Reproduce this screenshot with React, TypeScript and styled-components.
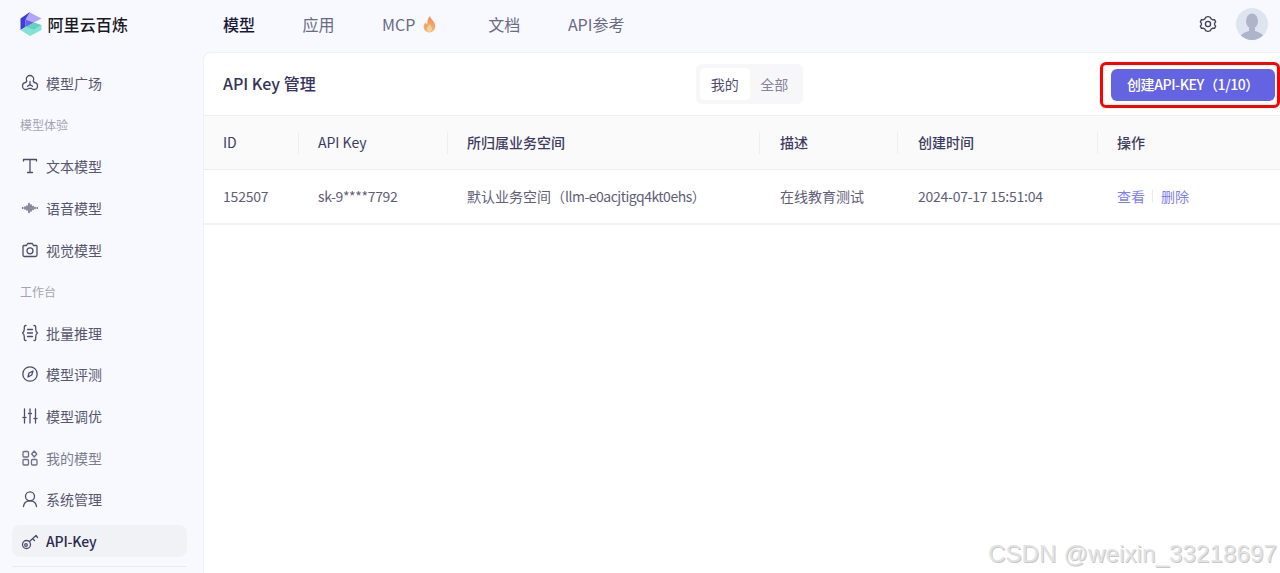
import React from 'react';
import styled, { createGlobalStyle } from 'styled-components';

const Global = createGlobalStyle`
  html, body { margin: 0; padding: 0; height: 573px; overflow: hidden; background: #f8f9fe; }
  body { font-family: "Noto Sans CJK SC", "Noto Sans", sans-serif; color: #26244c; }
  #root { height: 573px; }
  * { box-sizing: border-box; }
`;

const Page = styled.div`
  position: relative; height: 573px; width: 1280px; display: flex; flex-direction: column; overflow: hidden;
`;
const Header = styled.header`
  height: 52px; flex: none; display: flex; align-items: center; padding: 0 12.5px 4px 19.5px;
`;
const Brand = styled.div`
  width: 199.5px; display: flex; align-items: center; gap: 6px;
  font-size: 16px; font-weight: 500; color: #1a1a24; letter-spacing: 0.1px;
`;
const TopNav = styled.nav`
  display: flex; gap: 47.5px; font-size: 16px; flex: 1; padding-left: 4px;
`;
const TopLink = styled.span<{ $active?: boolean }>`
  display: flex; align-items: center; gap: 6px; white-space: nowrap;
  color: ${p => (p.$active ? '#1a1838' : '#6b6a85')};
  font-weight: ${p => (p.$active ? 500 : 400)};
  svg { margin-right: 2.5px; }
`;
const HeaderRight = styled.div`
  display: flex; align-items: center; gap: 19px;
`;
const Avatar = styled.div`
  width: 32px; height: 32px; border-radius: 50%; overflow: hidden; background: #dfe5ee; display: flex;
`;
const Body = styled.div`
  flex: 1; display: flex; min-height: 0;
`;
const Side = styled.aside`
  width: 203px; flex: none; padding: 15.3px 16px 0 12px; display: flex; flex-direction: column; gap: 9.6px;
`;
const SideItem = styled.div<{ $active?: boolean; $muted?: boolean }>`
  height: 32px; flex: none; display: flex; align-items: center; gap: 6px; padding-left: 8px; border-radius: 8px;
  font-size: 14px; color: ${p => (p.$active ? '#2c2a50' : p.$muted ? '#7d7c94' : '#57566f')};
  background: ${p => (p.$active ? '#f1f2f6' : 'transparent')};
  font-weight: ${p => (p.$active ? 500 : 400)};
  letter-spacing: ${p => (p.$active ? '-0.2px' : '0')};
  svg { flex: none; }
`;
const SideLabel = styled.div`
  height: 32px; flex: none; display: flex; align-items: center; padding-left: 8px; font-size: 12px; color: #a3a3b5;
`;
const Divider = styled.div`
  height: 1px; background: #e9eaf2; flex: none;
`;
const Main = styled.main`
  flex: 1; background: #fff; border-radius: 8px 0 0 0; border: 1px solid #f0f0f6; border-width: 1px 0 0 1px;
  display: flex; flex-direction: column; min-width: 0;
`;
const Toolbar = styled.div`
  height: 63px; flex: none; display: flex; align-items: center; padding-left: 19px;
  position: relative; border-bottom: 1px solid #eeeef3;
`;
const Title = styled.h1`
  margin: 0 0 2px; width: 473px; font-size: 16px; font-weight: 500; color: #35335a;
`;
const Segment = styled.div`
  width: 107px; height: 40px; background: #f7f7fa; border-radius: 6px; padding: 4px; display: flex;
`;
const SegmentItem = styled.div<{ $active?: boolean }>`
  width: 50px; display: flex; align-items: center; justify-content: center; font-size: 14px; border-radius: 5px;
  background: ${p => (p.$active ? '#fff' : 'transparent')};
  color: ${p => (p.$active ? '#504e6c' : '#85849a')};
`;
const Highlight = styled.div`
  margin-left: auto; width: 180px; height: 46px; margin-top: 1px; border: 3px solid #f00; border-radius: 6px;
  display: flex; align-items: center; padding-left: 8px;
`;
const CreateButton = styled.button`
  width: 164px; height: 32px; border: 0; border-radius: 6px; background: #6464e2; color: #fff; padding: 0 0 2px;
  font-family: inherit; font-size: 14px; font-weight: 500; white-space: nowrap; letter-spacing: -0.4px;
`;
const Row = styled.div<{ $head?: boolean }>`
  display: grid; grid-template-columns: 94px 149px 312px 138px 200px 1fr; align-items: center;
  height: ${p => (p.$head ? '54px' : '55px')}; flex: none;
  background: ${p => (p.$head ? '#fafafb' : '#fff')};
  border-bottom: ${p => (p.$head ? '1px solid #ecedf2' : '2px solid #f3f3f6')};
`;
const HeadCell = styled.div<{ $sep?: boolean; $medium?: boolean; $shift?: boolean }>`
  height: 22px; padding: 0 0 2px ${p => (p.$shift ? '20px' : '19px')}; display: flex; align-items: center; font-size: 14px; white-space: nowrap;
  color: #3d3b5e; font-weight: ${p => (p.$medium ? 500 : 400)};
  border-left: ${p => (p.$sep ? '1px solid #efeff3' : '0')};
`;
const Cell = styled.div<{ $first?: boolean; $shift?: boolean }>`
  padding: 0 0 1px ${p => (p.$first ? '19px' : p.$shift ? '21px' : '20px')};
  font-size: 14px; color: #5f5e78; white-space: nowrap; display: flex; align-items: center;
`;
const Tight = styled.span<{ $by: number }>`
  letter-spacing: ${p => p.$by}px;
`;
const Action = styled.span`
  color: #7f7ff0;
`;
const ActionSep = styled.span`
  width: 1px; height: 12px; background: #ececf2; margin: 0 8px 0 7px;
`;
const Watermark = styled.div`
  position: absolute; right: 3px; bottom: 5px; font-family: "Liberation Sans", sans-serif; font-size: 24px;
  color: #e3e3e3; text-shadow: 1px 1px 0 #c8c8c8; letter-spacing: 0.15px;
`;

const Ic: React.FC<{ children: React.ReactNode; c?: string }> = ({ children, c = '#4d4c6b' }) => (
  <svg width="20" height="20" viewBox="0 0 20 20" fill="none" stroke={c} strokeWidth="1.3" strokeLinecap="round" strokeLinejoin="round">
    {children}
  </svg>
);

const Logo = () => (
  <svg width="22" height="24" viewBox="0 0 22 24">
    <path d="M0.500 6.500 9.500 0.300 12 4 5.500 8V15L0.500 18z" fill="#3a3fd8" />
    <path d="M9.500 0.300 21.500 6.500 14 10.500 5.500 7.500z" fill="#b0a5f8" />
    <path d="M5.500 7.500 14 10.500 8 14 5.500 15z" fill="#6b5ee8" />
    <path d="M0.500 18 5.500 15 14 18 21.500 13V18L10 24z" fill="#82e2d3" />
    <path d="M5.500 15 14 10.500 21.500 13 14 18z" fill="#62cfc0" />
  </svg>
);

const Flame = () => (
  <svg width="17" height="19" viewBox="0 0 16 18">
    <defs>
      <linearGradient id="fl" x1="0" y1="0" x2="0" y2="1">
        <stop offset="0" stopColor="#ee8f55" />
        <stop offset="1" stopColor="#f2b777" />
      </linearGradient>
    </defs>
    <path d="M8.500 1c.6 3 3.800 4.500 4.800 8 .8 3.800-1.700 7.500-5.300 7.500S2 13.600 2.500 10.500c.3-1.700 1.200-2.800 2-3.700.2 1.200.7 2 1.500 2.300C5.600 6 6.500 3 8.500 1z" fill="url(#fl)" />
    <path d="M8 8.500c.6 1.500 2.400 2.500 2.400 4.600 0 1.800-1.100 3.100-2.400 3.100s-2.500-1.200-2.400-3c.1-1.900 1.900-2.900 2.400-4.700z" fill="#f5d28f" />
  </svg>
);

export default function App() {
  return (
    <Page>
      <Global />
      <Header>
        <Brand><Logo />阿里云百炼</Brand>
        <TopNav>
          <TopLink $active>模型</TopLink>
          <TopLink>应用</TopLink>
          <TopLink>MCP <Flame /></TopLink>
          <TopLink>文档</TopLink>
          <TopLink>API参考</TopLink>
        </TopNav>
        <HeaderRight>
          <svg width="18" height="18" viewBox="0 0 18 18" fill="none" stroke="#3f3e5c" strokeWidth="1.3" strokeLinejoin="round">
            <path d="M9 1.500l2.500.9.600 1.600 1.700.9 1.700-.3 1.200 2.300-1.100 1.300v1.600l1.100 1.300-1.200 2.300-1.700-.3-1.700.9-.6 1.600L9 16.500l-2.500-.9-.6-1.600-1.700-.9-1.700.3-1.200-2.300 1.100-1.300V8.200L1.300 6.900l1.200-2.300 1.700.3 1.700-.9.600-1.600z" />
            <circle cx="9" cy="9" r="2.600" />
          </svg>
          <Avatar>
            <svg width="32" height="32" viewBox="0 0 32 32">
              <ellipse cx="16" cy="13" rx="6" ry="7.500" fill="#aeb4ca" />
              <path d="M3 32c1-6 6-8 10-9v-3h6v3c4 1 9 3 10 9z" fill="#aeb4ca" />
            </svg>
          </Avatar>
        </HeaderRight>
      </Header>
      <Body>
        <Side>
          <SideItem>
            <Ic><path d="M10 2.500c2.200 0 3.700 1.700 3.700 3.600 0 .7-.2 1.300-.5 1.900l1.100 1.500c1.900.2 3.200 1.800 3.200 3.500 0 2-1.600 3.500-3.500 3.500-1 0-2-.4-2.600-1.200H8.600c-.6.800-1.600 1.200-2.600 1.200-1.900 0-3.500-1.500-3.500-3.500 0-1.700 1.300-3.300 3.200-3.500L6.800 8c-.3-.6-.5-1.200-.5-1.900 0-1.900 1.500-3.600 3.700-3.600z" /><path d="M10 8.500v3l-2.500 1.800M10 11.500l2.500 1.800" /></Ic>
            模型广场
          </SideItem>
          <SideLabel>模型体验</SideLabel>
          <SideItem>
            <Ic><path d="M3.500 5V3.500h13V5M10 3.500v13M7.500 16.500h5" /></Ic>
            文本模型
          </SideItem>
          <SideItem>
            <Ic><path d="M2.500 10h.5M5 9v2M7 8v4M9 5.500v9M11 7v6M13 8.500v3M15 9.500v1M17 10h.5" /></Ic>
            语音模型
          </SideItem>
          <SideItem>
            <Ic><path d="M3.500 5.500h3l1.200-2h4.600l1.200 2h3A1.500 1.500 0 0 1 17 7v8a1.500 1.500 0 0 1-1.500 1.500h-11A1.500 1.500 0 0 1 3 15V7a1.500 1.500 0 0 1 .5-1.500z" /><circle cx="10" cy="10.800" r="3" /></Ic>
            视觉模型
          </SideItem>
          <SideLabel>工作台</SideLabel>
          <SideItem>
            <Ic><path d="M6 2.500C4 2.500 4.300 4 4.300 6S4 9 2.500 10C4 11 4.300 12 4.300 14s-.3 3.500 1.700 3.500M14 2.500c2 0 1.700 1.500 1.700 3.500s.300 3 1.800 4c-1.500 1-1.800 2-1.800 4s.3 3.500-1.700 3.500M7.500 6.500h5M7.500 10h5M7.500 13.500h5" /></Ic>
            批量推理
          </SideItem>
          <SideItem>
            <Ic><circle cx="10" cy="10" r="7.200" /><path d="M13 7l-1.300 4L8 13l1-4z" /></Ic>
            模型评测
          </SideItem>
          <SideItem>
            <Ic><path d="M4.500 3v7M4.500 13v4M10 3v3M10 9v8M15.500 3v8M15.500 14v3M3 11.500h3M8.500 7.500h3M14 12.500h3" /></Ic>
            模型调优
          </SideItem>
          <SideItem $muted>
            <Ic c="#6f6e88"><rect x="3" y="3.500" width="5.500" height="5.500" rx="1" /><rect x="3" y="11.500" width="5.500" height="5.500" rx="1" /><rect x="11.500" y="11.500" width="5.500" height="5.500" rx="1" /><path d="M14.200 3l2.500 3-2.500 3-2.500-3z" /></Ic>
            我的模型
          </SideItem>
          <SideItem>
            <Ic><circle cx="10" cy="7.300" r="4.500" /><path d="M3.500 17.500c.4-3.500 3-5.700 6.500-5.700s6.100 2.200 6.500 5.700" /></Ic>
            系统管理
          </SideItem>
          <SideItem $active>
            <Ic><circle cx="6.500" cy="13.500" r="4" /><circle cx="6" cy="14" r="1.300" /><path d="M9.500 10.500 16 4.500l1.500 2M13 8l1.500 1.500" /></Ic>
            API-Key
          </SideItem>
          <Divider />
        </Side>
        <Main>
          <Toolbar>
            <Title>API Key 管理</Title>
            <Segment>
              <SegmentItem $active>我的</SegmentItem>
              <SegmentItem>全部</SegmentItem>
            </Segment>
            <Highlight>
              <CreateButton>创建API-KEY（1/10）</CreateButton>
            </Highlight>
          </Toolbar>
          <Row $head>
            <HeadCell>ID</HeadCell>
            <HeadCell $sep>API Key</HeadCell>
            <HeadCell $sep $medium>所归属业务空间</HeadCell>
            <HeadCell $sep $medium $shift>描述</HeadCell>
            <HeadCell $sep $medium $shift>创建时间</HeadCell>
            <HeadCell $sep $medium>操作</HeadCell>
          </Row>
          <Row>
            <Cell $first><Tight $by={-0.2}>152507</Tight></Cell>
            <Cell><Tight $by={-0.33}>sk-9****7792</Tight></Cell>
            <Cell>默认业务空间（<Tight $by={-0.5}>llm-e0acjtigq4kt0ehs</Tight>）</Cell>
            <Cell $shift>在线教育测试</Cell>
            <Cell $shift><Tight $by={-0.25}>2024-07-17 15:51:04</Tight></Cell>
            <Cell><Action>查看</Action><ActionSep /><Action>删除</Action></Cell>
          </Row>
        </Main>
      </Body>
      <Watermark>CSDN @weixin_33218697</Watermark>
    </Page>
  );
}
